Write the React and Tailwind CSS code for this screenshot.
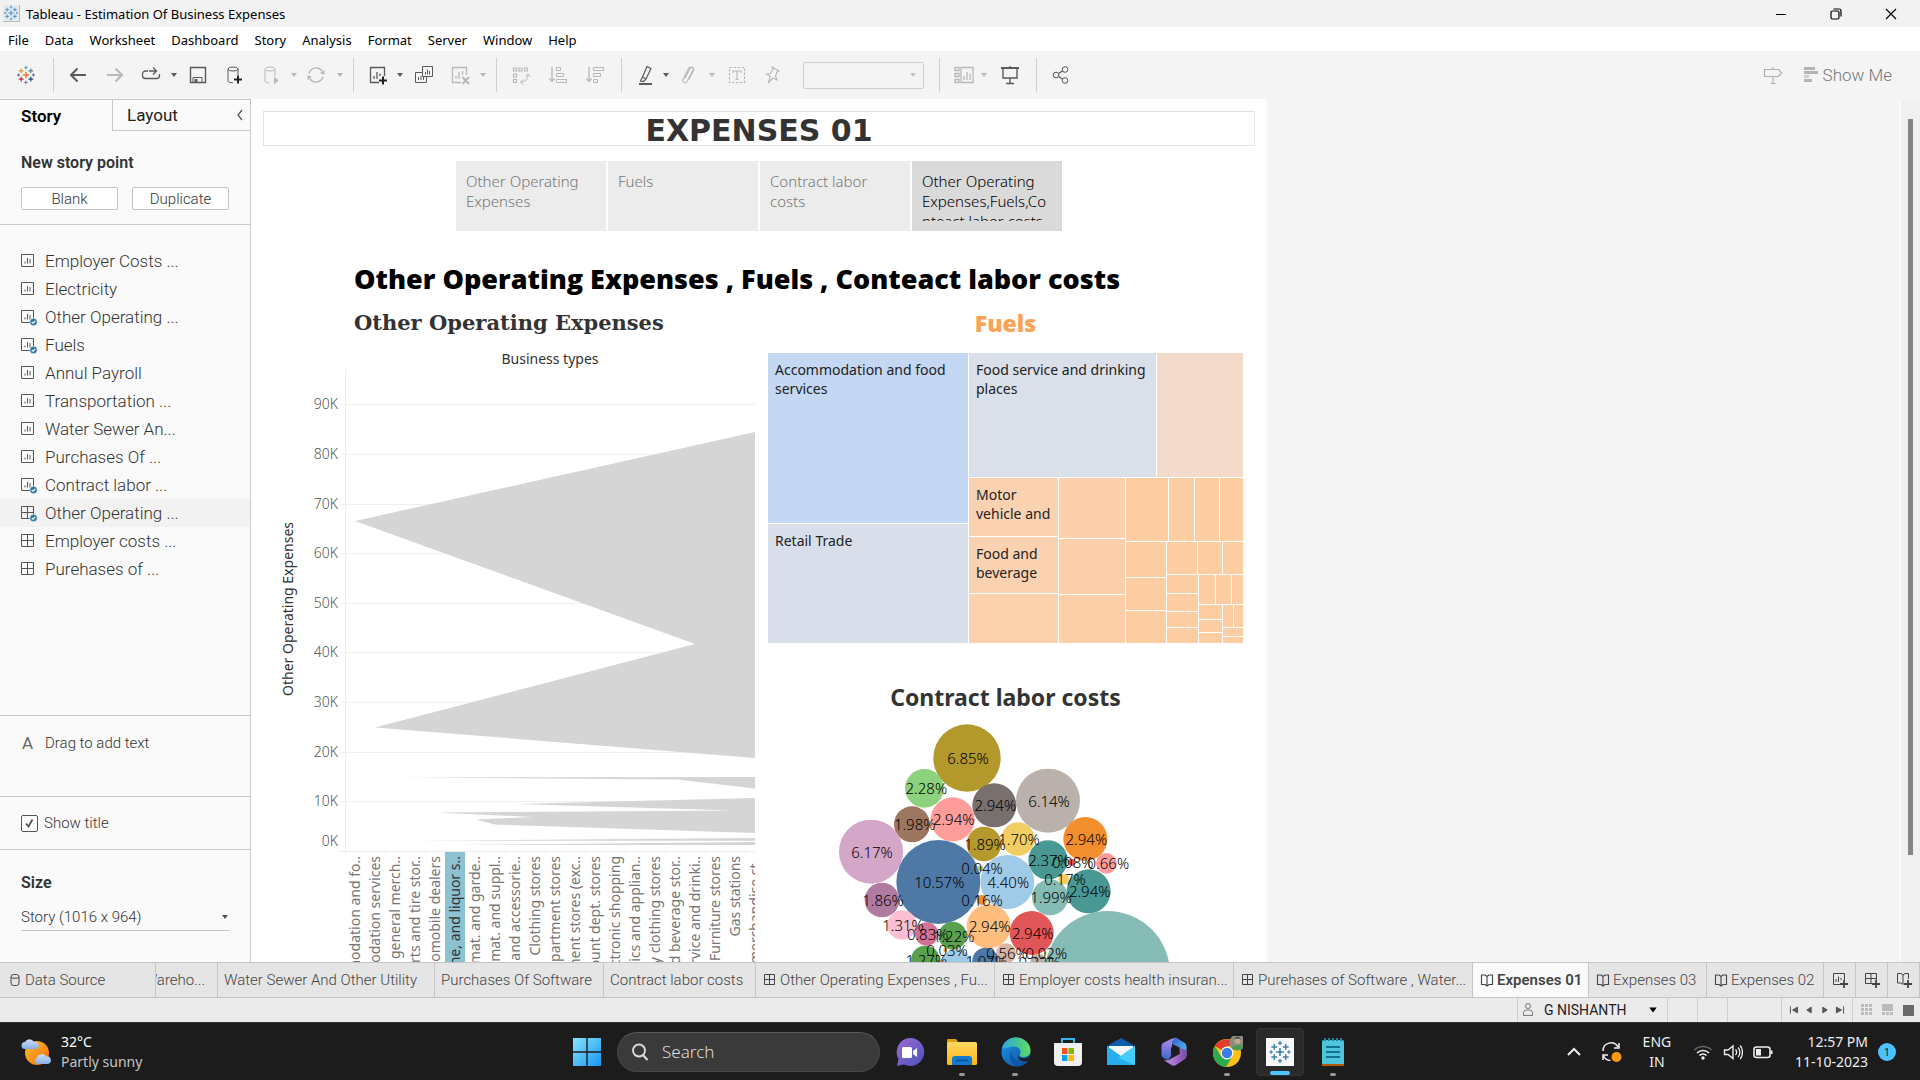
import React from "react";

const S = ({ children, className = "w-5 h-5", box = "0 0 20 20", ...rest }) => (
  <svg viewBox={box} className={className} fill="none" stroke="currentColor" aria-hidden="true" {...rest}>
    {children}
  </svg>
);

const Plus = ({ x, y, r, c, w = 1 }) => (
  <path d={`M${x - r} ${y}H${x + r}M${x} ${y - r}V${y + r}`} stroke={c} strokeWidth={w} />
);

const TableauMark = ({ className, mono }) => {
  const c = (v) => mono || v;
  return (
    <S className={className}>
      <Plus x={10} y={10} r={3.2} c={c("#e8762d")} w={1.4} />
      <Plus x={5.2} y={5.8} r={2.4} c={c("#eb912c")} w={1.2} />
      <Plus x={14.8} y={5.8} r={2.4} c={c("#5c87a6")} w={1.2} />
      <Plus x={5.2} y={14.2} r={2.4} c={c("#c72037")} w={1.2} />
      <Plus x={14.8} y={14.2} r={2.4} c={c("#1f447e")} w={1.2} />
      <Plus x={10} y={2.6} r={1.7} c={c("#7099a6")} />
      <Plus x={10} y={17.4} r={1.7} c={c("#8a6a9c")} />
      <Plus x={2.6} y={10} r={1.5} c={c("#5b6591")} />
      <Plus x={17.4} y={10} r={1.5} c={c("#5b6591")} />
    </S>
  );
};

const Caret = ({ className = "w-2 h-2" }) => (
  <S className={className} box="0 0 8 8" stroke="none">
    <path d="M1 2h6L4 6z" fill="currentColor" />
  </S>
);

const icons = {
  back: <path d="M18 10H3M9.500 3.500L3 10l6.500 6.500" strokeWidth="2" />,
  forward: <path d="M2 10h15M10.500 3.500L17 10l-6.500 6.500" strokeWidth="2" />,
  redo: <path d="M7 6H4.500a3 3 0 0 0-3 3v1.500a3 3 0 0 0 3 3h11a3 3 0 0 0 3-3V9M8 6h7M12 2.500L15.500 6 12 9.500" strokeWidth="1.300" />,
  save: <><path d="M2.500 2.500h15v15h-15z" strokeWidth="1.400" /><path d="M5 17.500v-5h9v5" /><path d="M6.500 14h3v3h-3z" fill="currentColor" stroke="none" /></>,
  dbAdd: <><ellipse cx="7" cy="4" rx="5" ry="2" /><path d="M2 4v12c0 1 2 1.800 5 1.800M12 4v6" /><path d="M12 10.500v8M8 14.500h8" stroke="#222" strokeWidth="2" /></>,
  dbRun: <><ellipse cx="8" cy="4" rx="5" ry="2" /><path d="M3 4v12c0 1 2 1.800 4 1.800M13 4v7" /><path d="M12 11.500v8l4.500-4z" fill="currentColor" stroke="none" /></>,
  refresh: <><path d="M3 8.500a7.300 7.300 0 0 1 13-2.500M17 11.500a7.300 7.300 0 0 1-13 2.500" strokeWidth="1.300" /><path d="M18.500 5v5l-4.500-2zM1.500 15v-5L6 12z" fill="currentColor" stroke="none" /></>,
  newSheet: <><path d="M11 17.500H2.500v-15h14V11M6 14v-3M9 14V7M12 11V8.500" strokeWidth="1.300" /><path d="M15 11.500v8M11 15.500h8" stroke="#222" strokeWidth="2" /></>,
  duplicate: <><path d="M8.500 1.500h10v10h-10zM11.500 9.500V7M13.500 9.500v-5M15.500 9.500V6" /><path d="M8.500 7.500h-7v10h11v-6M4.500 15v-3M7 15v-4M9.500 15v-3" /></>,
  clear: <><path d="M10 17.500H1.500v-15h14V10M5 14v-3M8 14V7M11.500 10V6" strokeWidth="1.300" /><path d="M11.500 12l6.500 7M18 12l-6.500 7" strokeWidth="2" /></>,
  swap: <><path d="M2.500 3h3v3h-3zM8 3h3v3H8zM13.500 3h3v3h-3zM2.500 9h3v3h-3zM2.500 14.500h3v3h-3z" strokeWidth="1.200" /><path d="M17 9.500c0 5-3 7.500-7 7.500M14.500 11.500l2.500-2.500 2 2.500M12 14.500L9.500 17l2.500 2.500" /></>,
  asc: <><path d="M4 2v14M1.500 13.500L4 16.500l2.500-3" strokeWidth="1.300" /><path d="M8.500 2.500h4v3h-4zM8.500 8.500h7v3h-7zM8.500 14.500h10v3h-10z" /></>,
  desc: <><path d="M4 2v14M1.500 13.500L4 16.500l2.500-3" strokeWidth="1.300" /><path d="M8.500 2.500h10v3h-10zM8.500 8.500h7v3h-7zM8.500 14.500h4v3h-4z" /></>,
  marker: <><path d="M11 1.500l4 2-5 10.500-3.500-2zM6.500 12l-2 4 3 .500L10 14" strokeWidth="1.200" /><path d="M3 19h13" strokeWidth="2" /></>,
  clip: <path d="M6 13l5-9.500c1-2 4-.5 3 1.500l-6 11.500c-1.500 2.500-5 .5-4-2l5.500-11c1.500-3 6-1 5 2l-4.500 9" strokeWidth="1.100" />,
  text: <><path d="M2.500 2.500h15v15h-15z" strokeDasharray="2.500 1.500" strokeWidth="1.200" /><path d="M6 8V6h8v2M10 6v9M8.500 14.500h3" strokeWidth="1.200" /></>,
  pin: <path d="M9 2l7 4-2 1-1.500 4 1.500 4-4-2-5 5 2.500-6.500-4-2.500 4-.5L10 4.500z" strokeWidth="1.100" />,
  cards: <><path d="M1 2.500h4v3H1zM1 8.500h4v3H1zM1 14.500h4v3H1zM7 2.500h12v15H7zM10 15v-4M13 15V7M16 15V9" strokeWidth="1.300" /></>,
  present: <><path d="M1 3h18" strokeWidth="2" /><path d="M3 4v9h14V4M10 1v2M10 13v5M6 18.500h8" strokeWidth="1.400" /></>,
  share: <><circle cx="5" cy="10" r="2.800" /><circle cx="14" cy="4.500" r="2.800" /><circle cx="14" cy="15.500" r="2.800" /><path d="M7.500 8.500l4-2.500M7.500 11.500l4 2.500" strokeWidth="1.400" /></>,
};

const tools = [
  ["sep", "ml-[17px]"],
  ["back", "ml-3.5"], ["forward", "ml-[17px]", 1], ["redo", "ml-4"], ["caret", "ml-[9px]"],
  ["save", "ml-2.5"], ["dbAdd", "ml-[18px]"], ["dbRun", "ml-4", 1], ["caret", "ml-2", 1],
  ["refresh", "ml-2", 1], ["caret", "ml-2.5", 1], ["sep", "ml-[9px]"],
  ["newSheet", "ml-3.5"], ["caret", "ml-2"], ["duplicate", "ml-2.5"], ["clear", "ml-[17px]", 1], ["caret", "ml-2", 1],
  ["sep", "ml-[9px]"], ["swap", "ml-3.5", 1], ["asc", "ml-[17px]", 1], ["desc", "ml-[17px]", 1], ["sep", "ml-4"],
  ["marker", "ml-3.5"], ["caret", "ml-1.5"], ["clip", "ml-[9px]", 1], ["caret", "ml-[9px]", 1],
  ["text", "ml-[11px]", 1], ["pin", "ml-4", 1], ["select", "ml-5"], ["sep", "ml-[15px]"],
  ["cards", "ml-3.5", 1], ["caret", "ml-1.5", 1], ["present", "ml-3"], ["sep", "ml-4"], ["share", "ml-3.5"],
];

function Toolbar() {
  return (
    <div className="h-12 shrink-0 bg-[#f4f4f4] flex items-center pl-4 pr-7" role="toolbar" aria-label="Main">
      <button aria-label="Start page"><TableauMark className="w-5 h-5" /></button>
      {tools.map(([name, gap, off], i) => {
        const tone = off ? "text-[#b8b8b8]" : "text-[#5a5a5a]";
        if (name === "sep") return <span key={i} className={`${gap} w-px h-[34px] bg-[#cfcfcf] shrink-0`} />;
        if (name === "select")
          return (
            <label key={i} className={`${gap} w-[121px] h-[27px] shrink-0 flex items-center border border-[#cfcfcf] rounded-xs text-[#c4c4c4]`}>
              <select aria-label="Fit" disabled className="appearance-none grow min-w-0 bg-transparent" />
              <Caret className="w-2 h-2 mr-1.5" />
            </label>
          );
        if (name === "caret")
          return <button key={i} aria-label="More" className={`${gap} ${tone} shrink-0`}><Caret /></button>;
        return (
          <button key={i} aria-label={name} className={`${gap} ${tone} shrink-0`}>
            <S>{icons[name]}</S>
          </button>
        );
      })}
      <button aria-label="Guide" className="ml-auto text-[#b0b0b0]">
        <S><path d="M1.500 4.500h14l3 3.500-3 3.500h-14zM10 2v2.500M10 11.500v7M7.500 18.500h5" strokeWidth="1.200" /></S>
      </button>
      <button className="ml-5 flex items-center gap-1 text-[17px] leading-6 font-light text-[#777]">
        <S className="w-4 h-4 text-[#b4b4b4]" box="0 0 16 16" stroke="none">
          <path d="M1 0h11v3H1zM1 4h14v3H1zM1 12h8v3H1z" fill="currentColor" />
          <path d="M1 8h5v3H1z" fill="#cfcfcf" />
        </S>
        Show Me
      </button>
    </div>
  );
}

const SheetIcon = ({ kind, used }) => (
  <S className="w-[18px] h-[18px]" box="0 0 18 18">
    {kind === "grid" ? (
      <path d="M1.500 2.500h12v12h-12zM7.500 2.500v12M1.500 8.500h12" />
    ) : (
      <path d="M1.500 2.500h12v12h-12zM5 11.500v-2M7.500 11.500V6M10 11.500V7" />
    )}
    {used && (
      <>
        <circle cx="13.500" cy="14" r="3.800" fill="#2f7ba0" stroke="#fafafa" strokeWidth=".6" />
        <path d="M11.800 14l1.300 1.300 2.200-2.500" stroke="#fff" strokeWidth="1.100" />
      </>
    )}
  </S>
);

const sheets = [
  ["Employer Costs ...", "bar"], ["Electricity", "bar"], ["Other Operating ...", "bar", 1], ["Fuels", "bar", 1],
  ["Annul Payroll", "bar"], ["Transportation ...", "bar"], ["Water Sewer An...", "bar"], ["Purchases Of ...", "bar"],
  ["Contract labor ...", "bar", 1], ["Other Operating ...", "grid", 1, 1], ["Employer costs ...", "grid"], ["Purehases of ...", "grid"],
];

function Sidebar() {
  return (
    <aside className="w-[251px] shrink-0 bg-[#fafafa] border-r border-t border-[#c9c9c9] flex flex-col text-[#333]">
      <div className="flex h-[31px] text-[17px] leading-6 shrink-0">
        <button className="w-28 pl-[21px] text-left font-semibold text-black">Story</button>
        <button className="grow border-l border-b border-[#c9c9c9] pl-3.5 text-left flex items-center justify-between pr-1 text-[#222]">
          Layout
          <S className="w-3 h-4 text-[#555]" box="0 0 12 16"><path d="M8 3L4 8l4 5" strokeWidth="1.300" /></S>
        </button>
      </div>
      <section className="px-[21px] pt-5 pb-3.5 border-b border-[#c9c9c9] shrink-0">
        <h2 className="text-base font-semibold">New story point</h2>
        <div className="flex gap-3.5 mt-3 text-[15px] font-light text-[#333]">
          <button className="w-[97px] h-[23px] border border-[#c4c4c4] rounded-xs bg-white leading-5">Blank</button>
          <button className="w-[97px] h-[23px] border border-[#c4c4c4] rounded-xs bg-white leading-5">Duplicate</button>
        </div>
      </section>
      <ul className="grow pt-[22px] min-h-0">
        {sheets.map(([name, kind, used, active], i) => (
          <li key={i} className={active ? "bg-[#f2f2f2]" : ""}>
            <button className="flex items-center gap-[7px] w-full h-7 pl-5 text-[17px] leading-6 font-light text-left text-[#555]">
              <SheetIcon kind={kind} used={used} />
              <span className="text-[#333]">{name}</span>
            </button>
          </li>
        ))}
      </ul>
      <section className="h-[81px] shrink-0 border-t border-[#c9c9c9] pt-[15px] pl-[22px] text-[15px] flex items-start gap-[13px] leading-6">
        <span className="w-2.5 text-[17px] text-[#666]">A</span>
        <span className="font-light">Drag to add text</span>
      </section>
      <section className="h-[53px] shrink-0 border-t border-[#c9c9c9] pl-5 flex items-center">
        <label className="flex items-center gap-1.5 text-[15px] font-light">
          <span className="grid w-[17px] h-[17px] ml-px">
            <input type="checkbox" defaultChecked className="peer appearance-none col-start-1 row-start-1 border border-[#555] rounded-xs bg-white" />
            <S className="w-[17px] h-[17px] col-start-1 row-start-1 pointer-events-none text-[#555]" box="0 0 17 17"><path d="M5 8.500l2.500 3 4-7" strokeWidth="1.800" /></S>
          </span>
          Show title
        </label>
      </section>
      <section className="h-[113px] shrink-0 border-t border-[#c9c9c9] px-[21px] pt-[21px]">
        <h2 className="text-base font-semibold leading-6">Size</h2>
        <label className="flex items-center mt-2.5 mb-2 pb-px border-b border-[#c4c4c4] text-[#555]">
          <select aria-label="Size" className="appearance-none grow bg-transparent text-[15px] leading-6 font-light text-[#333]">
            <option>Story (1016 x 964)</option>
          </select>
          <Caret className="w-2 h-2" />
        </label>
      </section>
    </aside>
  );
}

const areaLabels = [
  "Accommodation and fo..", "Accommodation services", "All other general merch..", "Auto parts and tire stor..", "Automobile dealers",
  "Beer, wine, and liquor s..", "Building mat. and garde..", "Building mat. and suppl..", "Clothing and accessorie..", "Clothing stores",
  "Department stores", "Department stores (exc..", "Discount dept. stores", "Electronic shopping", "Electronics and applian..",
  "Family clothing stores", "Food and beverage stor..", "Food service and drinki..", "Furniture stores", "Gas stations", "General merchandise st..",
];
const grid = [[404, "90K"], [454, "80K"], [504, "70K"], [553, "60K"], [603, "50K"], [652, "40K"], [702, "30K"], [752, "20K"], [801, "10K"]];

function AreaChart() {
  return (
    <svg viewBox="263 345 505 675" className="w-full block text-[14px] font-[Noto_Sans,sans-serif]" role="img" aria-label="Other Operating Expenses by business type">
      <clipPath id="plot"><path d="M263 345h492v675h-492z" /></clipPath>
      <text x="550" y="364" textAnchor="middle" fill="#333">Business types</text>
      <text transform="translate(293 609) rotate(-90)" textAnchor="middle" fill="#333">Other Operating Expenses</text>
      <g stroke="#f0f0f0" shapeRendering="crispEdges">
        {grid.map(([y]) => <path key={y} d={`M340 ${y + 0.5}H755`} />)}
        <path d="M345.500 369V855M340 851.500H755" stroke="#ececec" />
        {areaLabels.map((_, i) => <path key={i} d={`M${345.5 + i * 20} 851v4`} />)}
      </g>
      <g fill="#555" fontWeight="300" textAnchor="end">
        {grid.map(([y, t]) => <text key={t} x="338" y={y + 5}>{t}</text>)}
        <text x="338" y="846">0K</text>
      </g>
      <g fill="#d5d5d5">
        <path d="M355 521L755 432V758L375 727.500 695 644z" />
        <path d="M400 777.500L755 777V788.500L677 779.500z" />
        <path d="M516 804L755 798V833L495 824.500 476 819.500 533 817 436 812.500 733 810.500z" />
        <path d="M415 840.700L755 838V840.800zM455 845L755 842V845z" />
      </g>
      <rect x="445" y="852" width="20" height="168" fill="#8cc2d2" />
      <g clipPath="url(#plot)" textAnchor="end">
        {areaLabels.map((t, i) => (
          <text key={t} transform={`translate(${360 + i * 20} 856) rotate(-90)`} fill={i === 5 ? "#333" : "#757575"}>{t}</text>
        ))}
      </g>
    </svg>
  );
}

const tiles = [
  [768, 353, 200, 170, "#c4d7f3"], [768, 524, 200, 119, "#d9dfea"], [969, 353, 187, 124, "#dae0ea"], [1157, 353, 86, 124, "#f3daca"],
  [969, 478, 89, 58, "#fbd2b1"], [969, 537, 89, 56, "#fbd2b1"], [969, 594, 89, 49, "#fbd1ae"],
  [1059, 478, 66, 60, "#fcd0ac"], [1059, 539, 66, 55, "#fccfab"], [1059, 595, 66, 48, "#fdcfa9"],
  [1126, 478, 42, 63], [1169, 478, 25, 63], [1195, 478, 24, 63], [1220, 478, 23, 63],
  [1126, 542, 40, 35], [1126, 578, 40, 32], [1126, 611, 40, 32],
  [1167, 542, 30, 32], [1198, 542, 24, 32], [1223, 542, 20, 32],
  [1167, 575, 31, 18], [1167, 594, 31, 17], [1167, 612, 31, 15], [1167, 628, 31, 15],
  [1199, 575, 16, 29], [1216, 575, 15, 29], [1232, 575, 11, 29],
  [1199, 605, 23, 14], [1199, 620, 23, 12], [1199, 633, 23, 10],
  [1223, 605, 10, 22], [1234, 605, 9, 22], [1223, 628, 20, 8], [1223, 637, 20, 6],
];
const tileText = [
  [775, 375, "Accommodation and food"], [775, 394, "services"], [976, 375, "Food service and drinking"], [976, 394, "places"],
  [775, 546, "Retail Trade"], [976, 500, "Motor"], [976, 519, "vehicle and"], [976, 559, "Food and"], [976, 578, "beverage"],
];

function Treemap() {
  return (
    <svg viewBox="768 353 475 290" className="w-full block text-[14px] font-[Noto_Sans,sans-serif]" role="img" aria-label="Fuels by business type">
      <g shapeRendering="crispEdges">
        {tiles.map(([x, y, w, h, f = "#fecda2"], i) => <rect key={i} x={x} y={y} width={w} height={h} fill={f} />)}
      </g>
      {tileText.map(([x, y, t]) => <text key={t} x={x} y={y} fill="#222">{t}</text>)}
    </svg>
  );
}

const bubbles = [
  [441, 264, 101, "#b3992c", "6.85%"], [313, 355, 58, "#8cd17d", "2.28%", 316], [684, 392, 96, "#bab0ac", "6.14%"],
  [523, 406, 66, "#79706e", "2.94%"], [398, 448, 66, "#ff9d9a", "2.94%"], [276, 463, 54, "#9d7660", "1.98%", 281],
  [153, 545, 96, "#d4a6c8", "6.17%"], [355, 636, 126, "#4e79a7", "10.57%"], [492, 522, 52, "#b6992d", "1.89%"],
  [594, 507, 50, "#f1ce63", "1.70%"], [796, 507, 66, "#f28e2b", "2.94%"], [684, 570, 59, "#499894", "2.37%"],
  [755, 577, 11, "#e15759", "0.08%"], [859, 580, 31, "#ff9d9a", "0.66%", 862], [481, 595, 8, "#8cd17d", "0.04%", 483],
  [562, 636, 81, "#a0cbe8", "4.40%"], [731, 628, 16, "#f1ce63", "0.17%", 732], [806, 664, 66, "#499894", "2.94%"],
  [690, 682, 54, "#86bcb6", "1.99%"], [186, 690, 52, "#b07aa1", "1.86%"], [485, 690, 15, "#f28e2b", "0.16%", 483],
  [246, 765, 44, "#fabfd2", "1.31%"], [320, 792, 35, "#d37295", "0.83%"], [398, 797, 42, "#59a14f", "1.22%"],
  [506, 769, 66, "#ffbe7d", "2.94%"], [635, 789, 66, "#e15759", "2.94%"], [558, 850, 30, "#d7b5a6", "0.56%"],
  [376, 840, 6, "#f28e2b", "0.03%", 378], [862, 911, 188, "#86bcb6", ""], [316, 870, 43, "#59a14f", "1.27%"],
  [409, 883, 46, "#a0cbe8", ""], [496, 872, 39, "#4e79a7", "1.07%"], [655, 876, 24, "#bab0ac", "0.32%"], [676, 849, 4, "#8cd17d", "0.02%"],
];

function Bubbles() {
  return (
    <svg viewBox="768 720 475 300" className="w-full block text-[15px] font-light font-[Noto_Sans,sans-serif]" role="img" aria-label="Contract labor costs share">
      {bubbles.map(([x, y, r, f], i) => <circle key={i} cx={820 + x / 3} cy={670 + y / 3} r={r / 3} fill={f} />)}
      {bubbles.map(([x, y, r, f, t, tx], i) => t && (
        <text key={i} x={821 + (tx || x) / 3} y={676 + y / 3} textAnchor="middle" fill="#000">{t}</text>
      ))}
    </svg>
  );
}

const points = [
  [["Other Operating", "Expenses"]], [["Fuels"]], [["Contract labor", "costs"]],
  [["Other Operating", "Expenses,Fuels,Co", "nteact labor costs"], 1],
];

function StoryPage() {
  return (
    <div className="w-[1016px] shrink-0 bg-white px-3 pt-3 overflow-hidden">
      <h1 className="border border-[#e2e2e2] h-[35px] pt-1 flex items-center justify-center text-3xl leading-8 font-bold text-[#333] font-[DejaVu_Sans,sans-serif]">EXPENSES 01</h1>
      <nav className="flex justify-center gap-0.5 mt-[15px]">
        {points.map(([lines, on], i) => (
          <button key={i} className={`w-[150px] h-[70px] p-2.5 flex text-left text-[15px] leading-5 font-light font-[Noto_Sans,sans-serif] ${on ? "bg-[#dadada] text-black" : "bg-[#ececec] text-[#777]"}`}>
            <span className="h-[50px] overflow-hidden whitespace-nowrap">
              {lines.map((l) => <span key={l} className="block">{l}</span>)}
            </span>
          </button>
        ))}
      </nav>
      <h2 className="mt-[30px] mb-0.5 pl-[91px] text-[27px] leading-9 font-extrabold text-black font-[Open_Sans,sans-serif] whitespace-nowrap">
        Other Operating Expenses , Fuels , Conteact labor costs
      </h2>
      <div className="grid grid-cols-[505px_475px]">
        <section>
          <h3 className="pl-[91px] mt-2 h-[38px] text-[21px] leading-8 font-bold text-[#333] font-[DejaVu_Serif,serif]">Other Operating Expenses</h3>
          <AreaChart />
        </section>
        <section>
          <h3 className="mt-2 h-[46px] text-[23px] leading-8 font-extrabold text-center text-[#faa356] font-[Open_Sans,sans-serif]">Fuels</h3>
          <Treemap />
          <h3 className="mt-9 h-[41px] text-[23px] leading-9 font-bold text-center text-[#333] font-[Noto_Sans,sans-serif]">Contract labor costs</h3>
          <Bubbles />
        </section>
      </div>
    </div>
  );
}

const Book = ({ className = "w-3.5 h-3.5" }) => (
  <S className={className} box="0 0 14 14"><path d="M7 3.500L5 2H1.500v9.500H5l2 1.500 2-1.500h3.500V2H9zM7 3.500V13" strokeWidth="1.100" /></S>
);
const GridIcon = () => (
  <S className="w-3.5 h-3.5" box="0 0 14 14"><path d="M1.500 1.500h10v10h-10zM6.500 1.500v10M1.500 6.500h10" /></S>
);

const tabs = [
  ["w-[217px]", "Water Sewer And Other Utility"], ["w-[169px]", "Purchases Of Software"], ["w-[152px]", "Contract labor costs"],
  ["w-[239px]", "Other Operating Expenses , Fu...", "grid"], ["w-[239px]", "Employer costs health insuran...", "grid"],
  ["w-[239px]", "Purehases of Software , Water...", "grid"], ["w-[116px]", "Expenses 01", "book", 1],
  ["w-[118px]", "Expenses 03", "book"], ["w-[117px]", "Expenses 02", "book"],
];

function SheetTabs() {
  return (
    <nav className="h-9 shrink-0 flex border-y border-[#c6c6c6] bg-[#e5e5e5] text-[15px] leading-5 font-light text-[#444] whitespace-nowrap overflow-hidden">
      <button className="w-[156px] shrink-0 border-r border-[#c6c6c6] flex items-center gap-[3px] pl-2">
        <S className="w-3.5 h-3.5" box="0 0 14 14"><rect x="3" y="1.500" width="8" height="11" rx="2.500" /><path d="M3 4.500c1.500 1 6.500 1 8 0" /></S>
        Data Source
      </button>
      <button className="w-[62px] shrink-0 border-r border-[#c6c6c6] flex items-center justify-end pr-3 overflow-hidden">Wareho...</button>
      {tabs.map(([w, t, icon, on]) => (
        <button key={t} className={`${w} shrink border-r border-[#c6c6c6] flex items-center gap-[3px] ${icon ? "pl-[7px]" : "pl-1.5"} overflow-hidden ${on ? "bg-[#fafafa] font-semibold" : ""}`}>
          {icon === "grid" && <GridIcon />}
          {icon === "book" && <Book />}
          {t}
        </button>
      ))}
      {["bar", "grid", "book"].map((k) => (
        <button key={k} aria-label={`New ${k}`} className="w-8 shrink-0 border-r border-[#c6c6c6] flex items-center justify-center">
          <S className="w-4 h-4" box="0 0 16 16">
            {k === "bar" && <path d="M9 12.500H1.500v-11h11V8M4 10V7M6.500 10V4.500M9 8V6" />}
            {k === "grid" && <path d="M9 11.500H1.500v-10h11V8M7 1.500v10M1.500 6.500h11" />}
            {k === "book" && <path d="M7 3L5 1.500H1.500V11H5l2 1.500 1-1M7 3l2-1.500h3.500V7M7 3v9" />}
            <path d="M12 8v8M8 12h8" strokeWidth="1.800" />
          </S>
        </button>
      ))}
    </nav>
  );
}

function StatusBar() {
  const nav = ["M2 2v10M12 3v8L5 7z", "M10 3v8L4 7z", "M4 3v8l6-4z", "M12 2v10M2 3v8l7-4z"];
  return (
    <div className="h-6 shrink-0 bg-[#ebebeb] flex justify-end text-[14px] leading-5 text-[#222]">
      <button className="w-[150px] border-l border-[#cfcfcf] flex items-center pl-1 pr-[9px]">
        <S className="w-3 h-4 mr-2.5 text-[#777]" box="0 0 12 16"><circle cx="6" cy="4" r="2.500" /><path d="M1.500 13.500v-3c0-2 2-2.500 4.500-2.500s4.500.5 4.500 2.500v3z" /></S>
        G NISHANTH
        <Caret className="w-2.5 h-2.5 ml-auto text-black" />
      </button>
      <span className="w-[30px] border-l border-[#cfcfcf]" />
      <span className="w-[30px] border-l border-[#cfcfcf]" />
      <span className="w-[54px] border-l border-[#cfcfcf]" />
      <div className="w-[71px] border-l border-[#cfcfcf] flex items-center justify-around px-1 text-[#555]">
        {nav.map((d) => <button key={d} aria-label="Step"><S className="w-2.5 h-2.5" box="0 0 14 14"><path d={d} fill="currentColor" strokeWidth="1.400" /></S></button>)}
      </div>
      <div className="w-[68px] border-l border-[#cfcfcf] flex items-center justify-between pl-2 pr-1.5">
        <button aria-label="Sheet sorter"><S className="w-3 h-3 text-[#bbb]" box="0 0 12 12" stroke="none"><path fill="currentColor" d="M0 0h3v3H0zM4 0h3v3H4zM8 0h3v3H8zM0 4h3v3H0zM4 4h3v3H4zM8 4h3v3H8zM0 8h3v3H0zM4 8h3v3H4zM8 8h3v3H8z" /></S></button>
        <button aria-label="Filmstrip"><S className="w-3 h-3 text-[#bbb]" box="0 0 12 12" stroke="none"><path fill="currentColor" d="M0 0h11v7H0zM0 8h3v3H0zM4 8h3v3H4zM8 8h3v3H8z" /></S></button>
        <button aria-label="Tabs" className="w-[11px] h-[11px] bg-[#6a6a6a]" />
      </div>
    </div>
  );
}

const TaskIcon = ({ label, children, dot }) => (
  <button aria-label={label} className="w-12 h-12 shrink-0 grid place-items-center relative rounded">
    <svg viewBox="0 0 32 32" className="w-8 h-8" fill="none">{children}</svg>
    {dot && <span className="absolute bottom-0 w-1.5 h-[3px] rounded-full bg-[#999]" />}
  </button>
);

function Taskbar() {
  return (
    <footer className="h-[58px] shrink-0 bg-[#1c1c1c] border-t border-[#333] grid grid-cols-[1fr_auto_1fr] items-center text-white font-[Noto_Sans,sans-serif]">
      <svg width="0" height="0" className="absolute" aria-hidden="true">
        <defs>
          <linearGradient id="win" x1="0" y1="0" x2="1" y2="1"><stop stopColor="#8be4fb" /><stop offset="1" stopColor="#1496f5" /></linearGradient>
          <linearGradient id="sun" x1="0" y1="0" x2="1" y2="1"><stop stopColor="#fbc02d" /><stop offset="1" stopColor="#ef6c0a" /></linearGradient>
          <linearGradient id="cloud" x1="0" y1="0" x2="0" y2="1"><stop stopColor="#cfe0fa" /><stop offset="1" stopColor="#86aee8" /></linearGradient>
          <linearGradient id="chat" x1="0" y1="0" x2="1" y2="1"><stop stopColor="#9a6bd0" /><stop offset="1" stopColor="#4b53bc" /></linearGradient>
          <linearGradient id="folder" x1="0" y1="0" x2="0" y2="1"><stop stopColor="#ffd862" /><stop offset="1" stopColor="#fbb616" /></linearGradient>
          <linearGradient id="edgeA" x1="0" y1="0" x2="1" y2="0"><stop stopColor="#2aa5e8" /><stop offset="1" stopColor="#5fdc57" /></linearGradient>
          <linearGradient id="edgeB" x1="0" y1="0" x2="1" y2="1"><stop stopColor="#1e98e6" /><stop offset="1" stopColor="#0b4a97" /></linearGradient>
          <linearGradient id="copA" x1="0" y1="0" x2="0" y2="1"><stop stopColor="#b98bee" /><stop offset="1" stopColor="#3a66c8" /></linearGradient>
          <linearGradient id="copB" x1="0" y1="0" x2="1" y2="1"><stop stopColor="#2c5fc4" /><stop offset="1" stopColor="#62c4f8" /></linearGradient>
          <linearGradient id="copC" x1="0" y1="0" x2="1" y2="0"><stop stopColor="#c795f2" /><stop offset="1" stopColor="#7a4aa6" /></linearGradient>
        </defs>
      </svg>
      <button className="flex items-center gap-2 pl-[21px] text-left text-sm leading-5">
        <svg viewBox="0 0 32 32" className="w-8 h-8">
          <circle cx="16" cy="17" r="12" fill="url(#sun)" />
          <path d="M4 13a3.500 3.500 0 0 1 0-7 5 5 0 0 1 9 0 3.500 3.500 0 0 1 2 7z" fill="url(#cloud)" />
          <path d="M16 28a3.500 3.500 0 0 1 0-6.500 5 5 0 0 1 9-1 3.500 3.500 0 0 1 2 7.500z" fill="url(#cloud)" />
        </svg>
        <span><span className="block">32°C</span><span className="block text-[#c4c4c4]">Partly sunny</span></span>
      </button>
      <div className="flex items-center gap-[5px]">
        <TaskIcon label="Start">
          <path d="M2 2h13.300v13.300H2zM16.700 2H30v13.300H16.700zM2 16.700h13.300V30H2zM16.700 16.700H30V30H16.700z" fill="url(#win)" />
        </TaskIcon>
        <label className="w-[263px] h-10 ml-px rounded-full bg-[#3a3a3a] border border-[#484848] border-t-[#5a5a5a] flex items-center gap-3 pl-3">
          <S className="w-5 h-5 text-[#ddd]"><circle cx="9" cy="8.500" r="6" strokeWidth="1.800" /><path d="M13 13l4.500 5" strokeWidth="2" /></S>
          <input aria-label="Search" placeholder="Search" className="w-40 bg-transparent text-[17px] font-light placeholder:text-[#dcdcdc] outline-none" />
        </label>
        <TaskIcon label="Chat">
          <path d="M17 2a14 14 0 1 1-6 26.500L4 30l1.500-7A14 14 0 0 1 17 2z" fill="url(#chat)" />
          <rect x="9" y="11" width="10" height="11" rx="1.500" fill="#fff" /><path d="M20 15l4-3v9l-4-3z" fill="#fff" />
        </TaskIcon>
        <TaskIcon label="File Explorer" dot>
          <path d="M1 4a1 1 0 0 1 1-1h8l3 4H1z" fill="#e0a00f" /><rect x="1" y="6" width="30" height="23" rx="1.500" fill="url(#folder)" />
          <path d="M6 29v-6a3 3 0 0 1 3-3h14a3 3 0 0 1 3 3v6z" fill="#1379cf" /><path d="M10 24.500h12" stroke="#0a4f93" strokeWidth="1.500" />
        </TaskIcon>
        <TaskIcon label="Edge" dot>
          <circle cx="17" cy="16" r="14.500" fill="url(#edgeB)" />
          <path d="M3 12C5 4 12 1.500 17 1.500c9 0 15 7 14.500 13.500-.3 4-3.500 6-7 6-3 0-4.500-1.500-3.500-3 2-3-1-7.500-6-7.500C9.500 10.500 5.500 14 3 12z" fill="url(#edgeA)" />
          <path d="M13 15c-1 6 4 11 10 11 3 0 5-.8 7-2-3 4.500-8 6.500-12 6.500C12 29 9 22 13 15z" fill="#0d57a8" />
          <path d="M19 18c-1 2 1 4.500 6 4.500 3 0 5-1.500 6.500-3v4l-2.500 1.500c-6 1-11-1-10-7z" fill="#1c1c1c" />
        </TaskIcon>
        <TaskIcon label="Store">
          <path d="M10 7V3h12v4" stroke="#3ab4ee" strokeWidth="2" /><path d="M2 7h28v19a4 4 0 0 1-4 4H6a4 4 0 0 1-4-4z" fill="#f0f0f0" />
          <path d="M10 12h5.500v6H10z" fill="#f25022" /><path d="M16.500 12H22v6h-5.500z" fill="#7fba00" /><path d="M10 19h5.500v6H10z" fill="#00a4ef" /><path d="M16.500 19H22v6h-5.500z" fill="#ffb900" />
        </TaskIcon>
        <TaskIcon label="Mail">
          <path d="M2 10L16 2l14 8v5H2z" fill="#0a5cad" /><path d="M4 10h24v9L16 22 4 19z" fill="#f2f6fa" /><path d="M2 10l14 10L30 10v19H2z" fill="#28aef0" /><path d="M30 10L13 22l17 7z" fill="#45cdf8" />
        </TaskIcon>
        <TaskIcon label="Microsoft 365">
          <path d="M13 3l5-1.500-4 5.500v12l-4 5-4.500-2C4 21 3.500 20 3.500 18v-8c0-1.500.8-2.500 2-3.200z" fill="url(#copA)" />
          <path d="M18 1.500l8 5c1.800 1 2.500 2 2.500 4V20l-7-4.500v-4L14 8c0-3 1.500-5.500 4-6.500z" fill="url(#copB)" />
          <path d="M28.500 16v4c0 1.500-.5 2.500-2 3.500l-8.500 5.500c-1.500 1-3 1-4.500 0L5.500 24c2.500.8 5 .3 7-1l9-5.500v-5c4 0 7 1 7 3.500z" fill="url(#copC)" />
          <path d="M13 11.500l3.500-1.500 5 2.500v5.500L16 21l-3-2z" fill="#1c1c1c" />
        </TaskIcon>
        <TaskIcon label="Chrome" dot>
          <circle cx="16" cy="17" r="14" fill="#fbc116" /><path d="M16 17L3.900 10A14 14 0 0 1 28 10H16z" fill="#e33b2e" /><path d="M16 17l-6 3.500L3.900 10A14 14 0 0 0 15 31l6-10z" fill="#2da94f" />
          <circle cx="16" cy="17" r="6.500" fill="#fff" /><circle cx="16" cy="17" r="5.200" fill="#3a7cec" />
          <g transform="translate(1.500 -1)"><circle cx="25" cy="7.500" r="8" fill="#8b8f80" /><circle cx="25" cy="6" r="3" fill="#c9a892" /><path d="M22 5a3 3 0 0 1 6 0l-1-1.500h-4z" fill="#3a332e" /><path d="M19 13c1-3 10-4 12.500-1.500A8 8 0 0 1 19 13z" fill="#4f9b55" /></g>
        </TaskIcon>
        <button aria-label="Tableau" className="w-12 h-12 shrink-0 grid place-items-center relative rounded bg-[#2a2a2a] border border-[#333]">
          <span className="bg-[#f6f8fa] w-7 h-7 grid place-items-center"><TableauMark className="w-6 h-6" mono="#3f7ca8" /></span>
          <span className="absolute bottom-0 w-5 h-1 rounded-full bg-[#4cc2ff]" />
        </button>
        <TaskIcon label="Notepad" dot>
          <rect x="5" y="4" width="22" height="26" rx="1.500" fill="#4fc3de" /><path d="M5 28h22v2H5z" fill="#b3590c" /><path d="M7 3.500h18" stroke="#1f7fa0" strokeWidth="3" strokeDasharray="2 2" /><path d="M9 11h14M9 16h14M9 21h14" stroke="#14708c" strokeWidth="1.800" />
        </TaskIcon>
      </div>
      <div className="flex items-center justify-end text-sm leading-5 pr-6 text-[#eee]">
        <button aria-label="Show hidden icons"><S><path d="M4 13l6-6 6 6" strokeWidth="2" /></S></button>
        <button aria-label="Update" className="ml-[15px]"><S className="w-6 h-6" box="0 0 24 24"><path d="M4 11a8 8 0 0 1 15-4M20 3v5h-5M4 20v-5h5M4.500 16a8 8 0 0 0 7 4.500" strokeWidth="1.500" /><circle cx="17.500" cy="17" r="5" fill="#ff9a0d" stroke="none" /></S></button>
        <button className="ml-4 text-center w-9">ENG<br />IN</button>
        <button className="ml-[18px] flex items-center gap-2.5" aria-label="Network, volume and battery">
          <S className="w-5 h-5"><path d="M1.500 8a12 12 0 0 1 17 0" stroke="#666" strokeWidth="1.600" /><path d="M4 11a8.500 8.500 0 0 1 12 0M6.500 13.500a5 5 0 0 1 7 0" strokeWidth="1.700" /><circle cx="10" cy="16" r="1.700" fill="currentColor" stroke="none" /></S>
          <S className="w-5 h-5"><path d="M1.500 8v4.500H5l5 4V4L5 8z" strokeWidth="1.400" /><path d="M12.500 7.500c1.300 1.500 1.300 4 0 5.500M15 5.500c2.500 2.500 2.500 7 0 9.500M17.200 3.500c3 3.500 3 10 0 13.500" strokeWidth="1.300" /></S>
          <S className="w-5 h-5"><rect x="1" y="5" width="16" height="10.500" rx="2.500" strokeWidth="1.600" /><path d="M3 7h5v6.500H3z" fill="currentColor" stroke="none" /><path d="M18.500 8.500v3.500" strokeWidth="2" /></S>
        </button>
        <button className="ml-[22px] text-right">12:57 PM<br />11-10-2023</button>
        <button className="ml-2.5 w-[18px] h-[18px] rounded-full bg-[#4cc2ff] text-[#123] text-[11px] leading-[18px] text-center">1</button>
      </div>
    </footer>
  );
}

export default function App() {
  return (
    <div className="h-screen flex flex-col overflow-hidden font-[Roboto,sans-serif] text-[#333]">
      <header className="shrink-0 font-[Noto_Sans,sans-serif] text-black">
        <div className="h-[27px] bg-[#f2f2f2] flex items-center pl-[3px] text-[13px] leading-5">
          <span className="w-[17px] h-[17px] mr-1.5 bg-[#e3eaf0] border-r border-b border-[#bbb]"><TableauMark className="w-4 h-4" mono="#4a92c4" /></span>
          Tableau - Estimation Of Business Expenses
          <div className="ml-auto flex gap-[43px] pr-[23px]">
            <button aria-label="Minimize"><S className="w-3 h-3" box="0 0 12 12"><path d="M1 6.500h10" shapeRendering="crispEdges" /></S></button>
            <button aria-label="Restore"><S className="w-3 h-3" box="0 0 12 12"><rect x="1" y="3" width="8" height="8" rx="1.500" strokeWidth="1.200" /><path d="M3.500 1H9a2 2 0 0 1 2 2v5.500" strokeWidth="1.200" /></S></button>
            <button aria-label="Close"><S className="w-3 h-3" box="0 0 12 12"><path d="M1 1l10 10M11 1L1 11" strokeWidth="1.200" /></S></button>
          </div>
        </div>
        <nav className="h-6 bg-white flex items-center gap-4 pl-2 pt-px text-[13px] leading-5">
          {["File", "Data", "Worksheet", "Dashboard", "Story", "Analysis", "Format", "Server", "Window", "Help"].map((m) => <button key={m}>{m}</button>)}
        </nav>
      </header>
      <Toolbar />
      <main className="grow min-h-0 flex">
        <Sidebar />
        <div className="grow min-w-0 flex bg-[#f5f5f5] overflow-hidden">
          <StoryPage />
          <div className="ml-auto w-5 shrink-0 border-l border-white bg-[#f0f0f0] flex justify-center pt-5 pb-[107px]">
            <span className="w-[5px] bg-[#858585]" />
          </div>
        </div>
      </main>
      <SheetTabs />
      <StatusBar />
      <Taskbar />
    </div>
  );
}
